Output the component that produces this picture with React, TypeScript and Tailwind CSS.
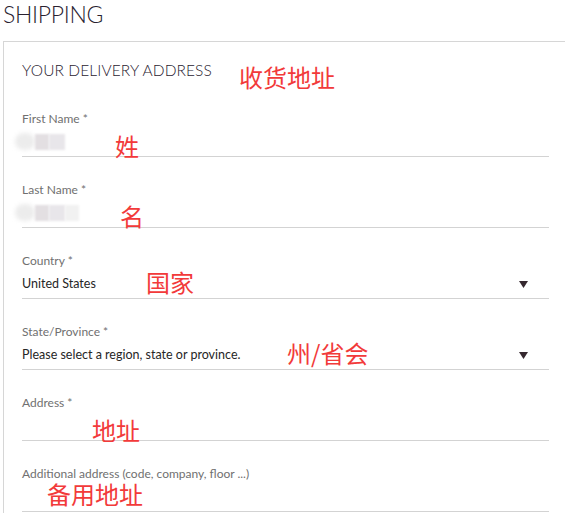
import React from 'react';

const cjk = "font-['Noto_Sans_CJK_SC',sans-serif]";

type Field = {
  label: string;
  value?: string;
  select?: boolean;
  blur?: 'first' | 'last';
  note: string;
  noteClass: string;
};

const fields: Field[] = [
  { label: 'First Name *', blur: 'first', note: '姓', noteClass: 'left-[93px] top-[8px]' },
  { label: 'Last Name *', blur: 'last', note: '名', noteClass: 'left-[98px] top-[7px]' },
  { label: 'Country *', value: 'United States', select: true, note: '国家', noteClass: 'left-[124px] top-[2px]' },
  {
    label: 'State/Province *',
    value: 'Please select a region, state or province.',
    select: true,
    note: '州/省会',
    noteClass: 'left-[265px] top-[2px]',
  },
  { label: 'Address *', note: '地址', noteClass: 'left-[70px] top-[8px]' },
  { label: 'Additional address (code, company, floor ...)', note: '备用地址', noteClass: 'left-[25px] top-[1px]' },
];

const Blurred: React.FC<{ kind: 'first' | 'last' }> = ({ kind }) => (
  <div className="absolute left-[-7px] top-[7px] flex items-center">
    <div className="w-[20px] h-[17px] rounded-full bg-[#ececec] blur-[2px]" />
    <div className="w-[14px] h-[16px] bg-[#e3dfe2] blur-[1px]" />
    <div className="w-[16px] h-[16px] bg-[#e8e6ea] blur-[1px]" />
    {kind === 'last' && <div className="w-[14px] h-[16px] bg-[#f1f1f1] blur-[1px]" />}
  </div>
);

const Arrow = () => (
  <svg width="9" height="7" viewBox="0 0 9 7" className="absolute right-[21px] top-[13px]">
    <path d="M0 0 H9 L4.5 7 Z" fill="#35282f" />
  </svg>
);

export default function App() {
  return (
    <div className="w-[565px] h-[513px] overflow-hidden bg-white font-['Lato','Liberation_Sans',sans-serif]">
      <h1 className="pl-[3px] pt-[3px] h-[41px] text-[23px] leading-[22px] font-light text-[#2a2230] tracking-[-0.3px]">
        SHIPPING
      </h1>
      <div className="ml-[3px] w-[566px] h-[480px] border border-[#d6d6d6] px-[18px] pt-[18px]">
        <div className="relative h-[20px] mb-[32px]">
          <h2 className="text-[15.5px] leading-[20px] font-light text-[#2a2230] tracking-[0.1px]">
            YOUR DELIVERY ADDRESS
          </h2>
          <span className={`absolute left-[217px] top-[5px] text-[24px] leading-[24px] text-[#f23a3a] ${cjk}`}>
            收货地址
          </span>
        </div>
        {fields.map((f) => (
          <div key={f.label} className="mb-[26px] w-[527px]">
            <div className="h-[14px] text-[12px] leading-[14px] text-[#707070]">{f.label}</div>
            <div className="relative h-[31px] border-b border-[#d3d3d3]">
              {f.blur && <Blurred kind={f.blur} />}
              {f.value && (
                <div className="pt-[8px] text-[12.5px] leading-[15px] text-[#262626]">{f.value}</div>
              )}
              {f.select && <Arrow />}
              <span
                className={`absolute ${f.noteClass} text-[24px] leading-[24px] text-[#f23a3a] ${cjk}`}
              >
                {f.note}
              </span>
            </div>
          </div>
        ))}
      </div>
    </div>
  );
}
